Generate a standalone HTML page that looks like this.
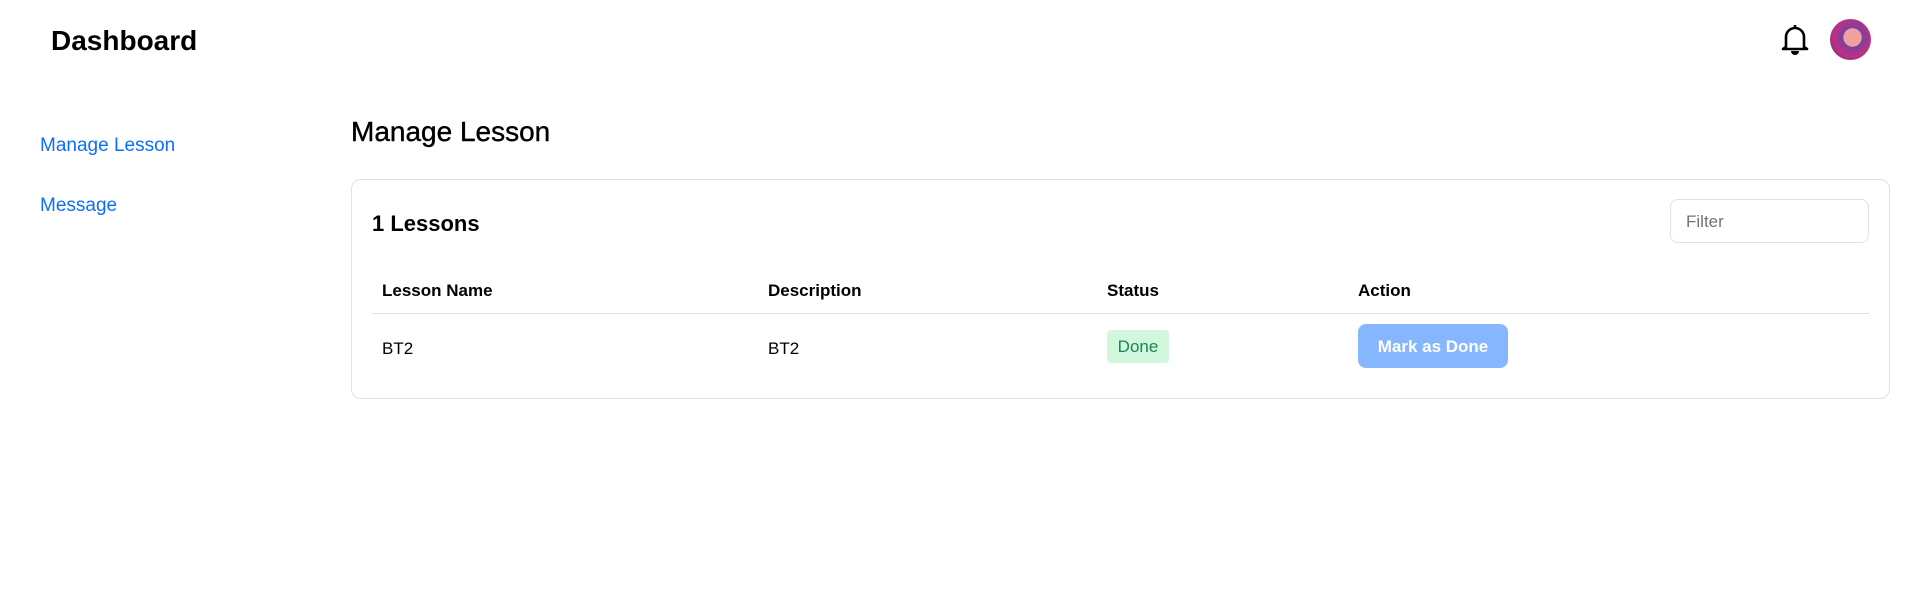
<!DOCTYPE html>
<html><head><style>
*{margin:0;padding:0;box-sizing:border-box}
body{width:1918px;height:603px;background:#fff;font-family:"Liberation Sans",sans-serif;color:#000;position:relative;overflow:hidden}
.a{position:absolute;white-space:nowrap}
</style></head><body>
<div class="a" style="left:51px;top:25px;font-size:28px;font-weight:bold">Dashboard</div>
<svg class="a" style="left:1780px;top:22px" width="30" height="34" viewBox="0 0 30 34"><path d="M15 3v2M6 25V15a9 9 0 0 1 18 0v10l3 2H3z" fill="none" stroke="#000" stroke-width="2.6" stroke-linejoin="round"/><path d="M11 29h8a4 4 0 0 1-8 0z" fill="#000"/></svg>
<div class="a" style="left:1830px;top:19px;width:41px;height:41px;border-radius:50%;background:radial-gradient(circle at 55% 45%,#f0a0a0 0 28%,#7a3fa0 30%,#c03080 60%,#3a2a7a 100%)"></div>
<div class="a" style="left:40px;top:135px;font-size:19px;color:#0d6efd">Manage Lesson</div>
<div class="a" style="left:40px;top:195px;font-size:19px;color:#0d6efd">Message</div>
<div class="a" style="left:351px;top:116px;font-size:28px;-webkit-text-stroke:0.4px #000">Manage Lesson</div>
<div class="a" style="left:351px;top:179px;width:1539px;height:220px;border:1px solid #dee2e6;border-radius:10px"></div>
<div class="a" style="left:372px;top:211px;font-size:22px;font-weight:bold">1 Lessons</div>
<div class="a" style="left:1670px;top:199px;width:199px;height:44px;border:1px solid #dee2e6;border-radius:8px;font-size:17px;color:#6c757d;padding:12px 15px">Filter</div>
<div class="a" style="left:382px;top:281px;font-size:17px;font-weight:bold">Lesson Name</div>
<div class="a" style="left:768px;top:281px;font-size:17px;font-weight:bold">Description</div>
<div class="a" style="left:1107px;top:281px;font-size:17px;font-weight:bold">Status</div>
<div class="a" style="left:1358px;top:281px;font-size:17px;font-weight:bold">Action</div>
<div class="a" style="left:372px;top:313px;width:1497px;height:1px;background:#dee2e6"></div>
<div class="a" style="left:382px;top:339px;font-size:17px">BT2</div>
<div class="a" style="left:768px;top:339px;font-size:17px">BT2</div>
<div class="a" style="left:1107px;top:330px;width:62px;height:33px;background:#d1f7dc;border-radius:4px;color:#198754;font-size:17px;text-align:center;line-height:34px">Done</div>
<div class="a" style="left:1358px;top:324px;width:150px;height:44px;background:#86b7fe;border-radius:8px;color:#fff;font-size:17px;font-weight:bold;text-align:center;line-height:46px">Mark as Done</div>
</body></html>
